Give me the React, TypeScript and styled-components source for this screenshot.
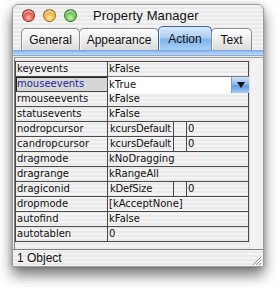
import React from "react";
import styled, { createGlobalStyle } from "styled-components";

const GlobalStyle = createGlobalStyle`
  html, body {
    margin: 0;
    padding: 0;
    background: #ffffff;
  }
`;

type Prop = { name: string; value: string; extra?: string; focused?: boolean };

const props: Prop[] = [
  { name: "keyevents", value: "kFalse" },
  { name: "mouseevents", value: "kTrue", focused: true },
  { name: "rmouseevents", value: "kFalse" },
  { name: "statusevents", value: "kFalse" },
  { name: "nodropcursor", value: "kcursDefault", extra: "0" },
  { name: "candropcursor", value: "kcursDefault", extra: "0" },
  { name: "dragmode", value: "kNoDragging" },
  { name: "dragrange", value: "kRangeAll" },
  { name: "dragiconid", value: "kDefSize", extra: "0" },
  { name: "dropmode", value: "[kAcceptNone]" },
  { name: "autofind", value: "kFalse" },
  { name: "autotablen", value: "0" },
];

const tabs = [
  { label: "General", w: 59 },
  { label: "Appearance", w: 80 },
  { label: "Action", w: 54 },
  { label: "Text", w: 41 },
];

const App = () => {
  return (
    <Page>
      <GlobalStyle />
      <Window>
        <TitleBar>
          <Light $c="red" />
          <Light $c="yellow" />
          <Light $c="green" />
          <Title>Property Manager</Title>
        </TitleBar>
        <TabBar>
          {tabs.map((t) => (
            <Tab key={t.label} $w={t.w} $active={t.label === "Action"}>
              {t.label}
            </Tab>
          ))}
        </TabBar>
        <Band />
        <ListBox>
          <Table>
            {props.map((p) => (
              <Row key={p.name}>
                <NameCell $focused={p.focused}>{p.name}</NameCell>
                {p.focused ? (
                  <EditCell>
                    <span>{p.value}</span>
                    <PopupButton>
                      <svg width="8" height="6" viewBox="0 0 8 6">
                        <path d="M0 0 L8 0 L4 6 Z" fill="#111" />
                      </svg>
                    </PopupButton>
                  </EditCell>
                ) : p.extra !== undefined ? (
                  <SplitCell>
                    <span>{p.value}</span>
                    <span />
                    <span>{p.extra}</span>
                  </SplitCell>
                ) : (
                  <ValueCell>{p.value}</ValueCell>
                )}
              </Row>
            ))}
          </Table>
          <Track />
        </ListBox>
        <StatusBar>
          <span>1 Object</span>
          <Grip>
            <svg width="12" height="12" viewBox="0 0 12 12">
              <path d="M11 3 L3 11 M11 6 L6 11 M11 9 L9 11" stroke="#8a8a8a" strokeWidth="1" />
              <path d="M11 4 L4 11 M11 7 L7 11 M11 10 L10 11" stroke="#fff" strokeWidth="1" />
            </svg>
          </Grip>
        </StatusBar>
      </Window>
    </Page>
  );
};

export default App;

const stripes = `repeating-linear-gradient(to bottom, #f4f4f4 0px, #f4f4f4 2px, #e9e9e9 2px, #e9e9e9 4px)`;

const Page = styled.div`
  padding: 4px 13px 24px 12px;
  width: 277px;
  box-sizing: border-box;
`;

const Window = styled.div`
  width: 252px;
  height: 263px;
  box-sizing: border-box;
  border: 1px solid #9c9c9c;
  border-radius: 6px 6px 0 0;
  background: ${stripes};
  box-shadow: 0 8px 14px rgba(0, 0, 0, 0.55), 0 0 4px rgba(0, 0, 0, 0.2);
  display: flex;
  flex-direction: column;
  font-family: "Liberation Sans", Arial, sans-serif;
  overflow: hidden;
`;

const TitleBar = styled.div`
  height: 21px;
  display: flex;
  align-items: center;
  padding-left: 9px;
  gap: 8px;
`;

const lightColors: Record<string, [string, string, string]> = {
  red: ["#ffc4b8", "#e2412f", "#8e1a0e"],
  yellow: ["#fff0b0", "#f3a823", "#a86400"],
  green: ["#d6f5b8", "#55b93c", "#1f6f14"],
};

const Light = styled.div<{ $c: string }>`
  width: 13px;
  height: 13px;
  border-radius: 50%;
  box-sizing: border-box;
  border: 1px solid rgba(0, 0, 0, 0.35);
  background: radial-gradient(
    circle at 50% 70%,
    ${(p) => lightColors[p.$c][0]} 0%,
    ${(p) => lightColors[p.$c][1]} 55%,
    ${(p) => lightColors[p.$c][2]} 100%
  );
  box-shadow: inset 0 2px 2px rgba(255, 255, 255, 0.6);
`;

const Title = styled.div`
  margin-left: 8px;
  font-size: 13px;
  color: #111;
  letter-spacing: 0.1px;
`;

const TabBar = styled.div`
  height: 24px;
  display: flex;
  align-items: flex-end;
  padding-left: 8px;
`;

const Tab = styled.div<{ $w: number; $active?: boolean }>`
  width: ${(p) => p.$w}px;
  height: ${(p) => (p.$active ? 24 : 22)}px;
  box-sizing: border-box;
  display: flex;
  align-items: center;
  justify-content: center;
  font-size: 12px;
  color: #111;
  border: 1px solid ${(p) => (p.$active ? "#3b63a6" : "#8c8c8c")};
  border-bottom: none;
  border-radius: 5px 5px 0 0;
  margin-right: -1px;
  background: ${(p) =>
    p.$active
      ? "linear-gradient(to bottom, #d7e9fb 0%, #aecff3 45%, #7fb3ec 55%, #a9d2f7 100%)"
      : "linear-gradient(to bottom, #fdfdfd 0%, #ececec 55%, #dadada 100%)"};
  box-shadow: inset 1px 0 0 rgba(255, 255, 255, 0.7);
`;

const Band = styled.div`
  height: 5px;
  background: linear-gradient(to bottom, #6f9fe2 0%, #9fc4f2 40%, #bcd7f6 100%);
  border-bottom: 1px solid #8aa8d2;
`;

const ListBox = styled.div`
  margin: 1px 0 0 1px;
  height: 192px;
  box-sizing: border-box;
  border-left: 1px solid #7c7c7c;
  border-top: 1px solid #9a9a9a;
  display: flex;
  padding-top: 3px;
`;

const Table = styled.div`
  width: 233px;
  align-self: flex-start;
  border-top: 1px solid #4a4a4a;
  border-left: 1px solid #4a4a4a;
  font-family: "DejaVu Sans", Verdana, sans-serif;
  font-size: 10px;
  color: #111;
`;

const Row = styled.div`
  display: grid;
  grid-template-columns: 92px 1fr;
  height: 15px;
  box-sizing: border-box;
  border-bottom: 1px solid #4a4a4a;
`;

const NameCell = styled.div<{ $focused?: boolean }>`
  border-right: 1px solid #4a4a4a;
  padding-left: 1px;
  line-height: 14px;
  white-space: nowrap;
  overflow: hidden;
  color: ${(p) => (p.$focused ? "#1c2a9a" : "#111")};
  background: ${(p) => (p.$focused ? "#d6d6d6" : "transparent")};
  box-shadow: ${(p) => (p.$focused ? "inset 0 1px 0 #222, inset 1px 0 0 #222" : "none")};
`;

const ValueCell = styled.div`
  padding-left: 1px;
  line-height: 14px;
  white-space: pre;
  overflow: hidden;
  border-right: 1px solid #4a4a4a;
`;

const SplitCell = styled.div`
  display: grid;
  grid-template-columns: 66px 13px 1fr;
  border-right: 1px solid #4a4a4a;
  span {
    line-height: 14px;
    white-space: nowrap;
    overflow: visible;
    padding-left: 1px;
    border-right: 1px solid #4a4a4a;
  }
  span:first-child {
    padding-left: 2px;
    letter-spacing: -0.2px;
  }
  span:last-child {
    border-right: none;
  }
`;

const EditCell = styled.div`
  position: relative;
  display: flex;
  align-items: center;
  justify-content: space-between;
  background: #ffffff;
  margin: -1px 0 -2px 0;
  padding-left: 1px;
  border-top: 1px solid #7a7a7a;
  span {
    line-height: 14px;
  }
`;

const PopupButton = styled.div`
  width: 17px;
  height: 16px;
  display: flex;
  align-items: center;
  justify-content: center;
  background: linear-gradient(to bottom, #cfe3f8 0%, #8dbcef 45%, #5f9be3 55%, #a7cff6 100%);
  border-left: 1px solid #7b9fd0;
`;

const Track = styled.div`
  flex: 1;
  margin-top: -3px;
  background: #f2f2f2;
  border-left: 1px solid #e0e0e0;
`;

const StatusBar = styled.div`
  flex: 1;
  display: flex;
  align-items: center;
  justify-content: space-between;
  border-top: 1px solid #808080;
  padding-left: 4px;
  font-size: 12px;
  color: #111;
`;

const Grip = styled.div`
  align-self: flex-end;
  display: flex;
  margin-right: 1px;
`;
